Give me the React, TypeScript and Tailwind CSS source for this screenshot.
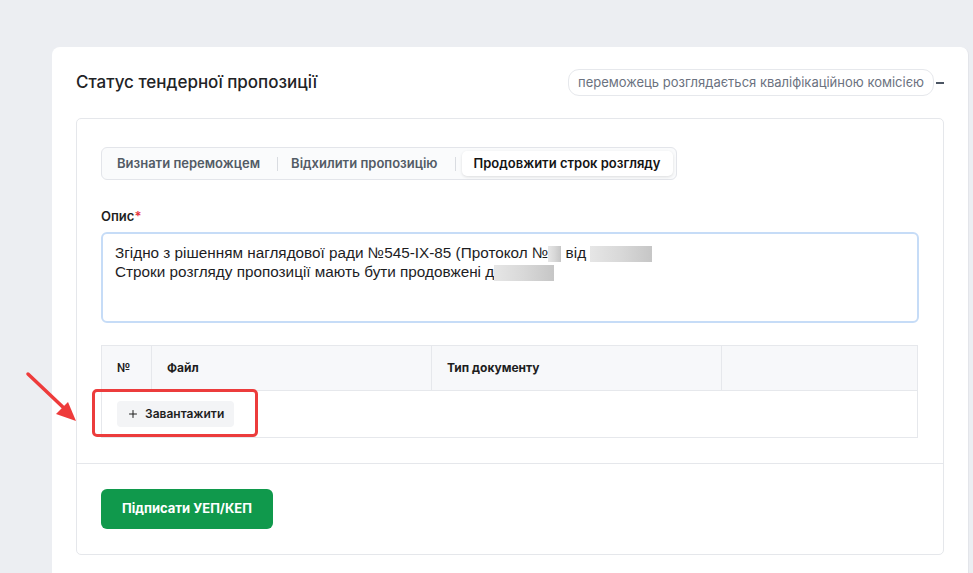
import { Plus } from "lucide-react";

const TABS = ["Визнати переможцем", "Відхилити пропозицію", "Продовжити строк розгляду"];

// blurred placeholder for redacted text
function Redacted({ w }: { w: number }) {
    return (
        <span
            className="inline-block align-middle h-[16px] bg-gradient-to-r from-[#e6e6e6] via-[#d8d8d8] to-[#c6c6c6]"
            style={{ width: w }}
        />
    );
}

export default function App() {
    const active = 2;

    return (
        <div className="min-h-[573px] bg-[#eceef2] pl-[52px] pt-[47px] font-['Inter','Noto_Sans',sans-serif] relative overflow-hidden">
            {/* Red arrow pointing at upload */}
            <svg className="absolute left-[22px] top-[368px]" width="62" height="60" viewBox="0 0 62 60">
                <line x1="6" y1="6" x2="44" y2="42" stroke="#ee3b3b" strokeWidth="3.5" strokeLinecap="round" />
                <polygon points="54,53 34,46 46,34" fill="#ee3b3b" />
            </svg>

            <div className="w-[917px] bg-white rounded-t-lg px-6 pt-[22px] pb-[18px] border-r border-[#e3e5ea]">
                {/* Header */}
                <div className="flex items-center justify-between h-[27px]">
                    <h2 className="text-[17px] font-medium text-[#222326]">Статус тендерної пропозиції</h2>
                    <div className="flex items-center">
                        <span className="h-[27px] px-[9px] flex items-center rounded-[11px] border border-[#e6e8ec] text-[13px] text-[#6b7280]">
                            переможець розглядається кваліфікаційною комісією
                        </span>
                        <span className="w-[8px] h-[2px] bg-[#4b5563] ml-[2px]" />
                    </div>
                </div>

                {/* Inner card */}
                <div className="mt-[22px] border border-[#e5e7eb] rounded-[5px]">
                    <div className="px-6 pt-[28px] pb-[25px]">
                        {/* Tabs */}
                        <div className="flex w-fit items-center h-[33px] px-[3px] border border-[#e3e5ea] rounded-[6px] bg-[#fafbfc]">
                            {TABS.map((t, i) => (
                                <div key={t} className="flex items-center">
                                    {i === 1 && <span className="w-px h-[14px] bg-[#d9dce1] ml-[5px] mr-[1px]" />}
                                    {i === 2 && <span className="w-px h-[14px] bg-[#d9dce1] ml-[5px] mr-[6px]" />}
                                    <button
                                        className={`h-[25px] px-[12px] text-[13px] font-semibold rounded-[5px] ${
                                            i === active
                                                ? "bg-white text-[#141414] shadow-[0_1px_3px_rgba(0,0,0,0.12)]"
                                                : "text-[#535b66]"
                                        }`}
                                    >
                                        {t}
                                    </button>
                                </div>
                            ))}
                        </div>

                        {/* Description */}
                        <div className="mt-[28px] text-[13px] font-semibold text-[#1f1f1f] leading-[16px]">
                            Опис<span className="text-[#e5303a]">*</span>
                        </div>
                        <div className="mt-[8px] h-[91px] border-2 border-[#c6dcf7] rounded-[6px] px-[12px] pt-[9px] text-[15.3px] leading-[19px] text-[#1d1d1f] font-['Liberation_Sans',sans-serif]">
                            <div>
                                Згідно з рішенням наглядової ради №545-IX-85 (Протокол №<Redacted w={13} /> від <Redacted w={62} />
                            </div>
                            <div>
                                Строки розгляду пропозиції мають бути продовжені д<Redacted w={60} />
                            </div>
                        </div>

                        {/* Files table */}
                        <div className="mt-[22px] border border-[#e6e8ec] w-[817px]">
                            <div className="flex h-[45px] bg-[#f7f8fa] border-b border-[#e6e8ec] text-[12px] font-bold text-[#1e1e1e]">
                                <div className="w-[50px] flex items-center pl-[15px] border-r border-[#e6e8ec]">№</div>
                                <div className="w-[280px] flex items-center pl-[15px] border-r border-[#e6e8ec]">Файл</div>
                                <div className="w-[290px] flex items-center pl-[15px] border-r border-[#e6e8ec]">Тип документу</div>
                                <div className="flex-1" />
                            </div>
                            <div className="relative h-[46px] flex items-center pl-[15px]">
                                <button className="h-[26px] px-[10px] flex items-center gap-[6px] bg-[#f3f4f6] rounded-[4px] text-[12px] font-semibold text-[#1e1e1e]">
                                    <Plus size={12} strokeWidth={2} />
                                    Завантажити
                                </button>
                                {/* highlight */}
                                <div className="absolute left-[-10px] top-[-2px] w-[166px] h-[48px] border-[3px] border-[#ec3c3c] rounded-[5px]" />
                            </div>
                        </div>
                    </div>

                    <div className="border-t border-[#e5e7eb] px-6 pt-[25px] pb-[25px]">
                        <button className="h-[40px] px-[21px] bg-[#10994c] rounded-[6px] text-white text-[13px] font-bold">
                            Підписати УЕП/КЕП
                        </button>
                    </div>
                </div>
            </div>
        </div>
    );
}
